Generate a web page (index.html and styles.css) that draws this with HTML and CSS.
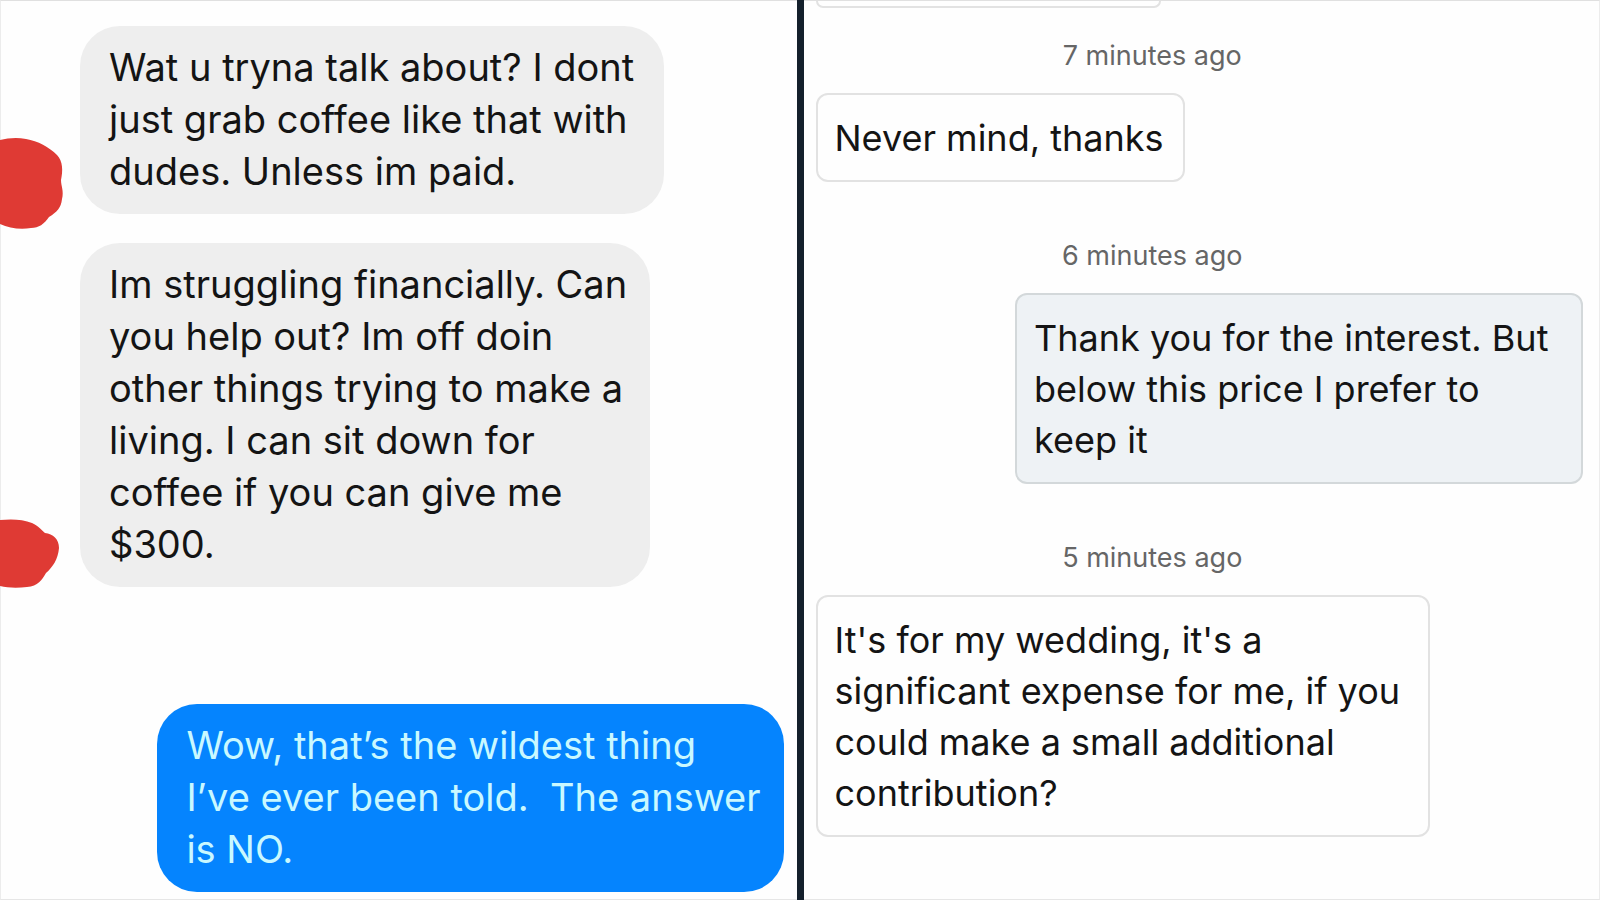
FILE: index.html
```html
<!DOCTYPE html>
<html lang="en">
<head>
<meta charset="utf-8">
<title>Conversations</title>
<link rel="stylesheet" href="styles.css">
</head>
<body>
<main class="split">
  <section class="panel chat" aria-label="Coffee conversation">
    <div class="row">
      <svg class="scribble scribble-round" viewBox="0 0 64 94" aria-hidden="true"><path d="M0 3C8 1 17 0 26 2C38 4 49 10 57 18C63 24 63 34 61 43C61 49 64 54 62 62C61 71 57 75 49 80C44 87 39 91 31 91C20 93 9 91 0 87Z"/></svg>
      <p class="bubble bubble-first">Wat u tryna talk about? I dont just grab coffee like that with dudes. Unless im paid.</p>
    </div>
    <div class="row">
      <svg class="scribble scribble-flat" viewBox="0 0 64 70" aria-hidden="true"><path d="M0 1C10 0 23 0 32 4C39 7 41 11 45 14C53 15 59 20 59 29C58 40 53 48 46 54C42 61 38 67 27 68C18 69 8 69 0 67Z"/></svg>
      <p class="bubble bubble-second">Im struggling financially. Can you help out? Im off doin<br>other things trying to make a living. I can sit down for<br>coffee if you can give me $300.</p>
    </div>
    <div class="row row-sent">
      <p class="bubble bubble-sent">Wow, that’s the wildest thing I’ve ever been told.&nbsp; The answer is NO.</p>
    </div>
  </section>
  <section class="panel market" aria-label="Price conversation">
    <div class="card card-cut"></div>
    <time class="stamp stamp-first">7 minutes ago</time>
    <p class="card">Never mind, thanks</p>
    <time class="stamp">6 minutes ago</time>
    <p class="card card-sent">Thank you for the interest. But below this price I prefer to keep it</p>
    <time class="stamp">5 minutes ago</time>
    <p class="card card-long">It's for my wedding, it's a significant expense for me, if you could make a small additional contribution?</p>
  </section>
</main>
</body>
</html>
```
FILE: styles.css
```css
* {
  box-sizing: border-box;
}

body {
  margin: 0;
  background: #fefefe;
  color: #141414;
  font-family: Inter, "Liberation Sans", sans-serif;
}

p {
  margin: 0;
}

.split {
  display: grid;
  grid-template-columns: 1fr 7px 1fr;
  min-height: 100vh;
  background: #14202c;
}

.panel {
  background: #fefefe;
  border-top: 1px solid #e0e0e0;
  border-bottom: 1px solid #e6e6e6;
}

.chat {
  grid-column: 1;
  display: flex;
  flex-direction: column;
  gap: 29px;
  padding: 25px 13px 6px 79px;
  border-left: 1px solid #ececec;
}

.row {
  position: relative;
  display: flex;
}

.row-sent {
  justify-content: flex-end;
  margin-top: 88px;
}

.bubble {
  padding: 15px 16px 17px 29px;
  border-radius: 40px;
  background: #eeeeee;
  font-size: 38px;
  line-height: 52px;
}

.bubble-first {
  width: 83%;
}

.bubble-second {
  width: 81%;
}

.bubble-sent {
  width: 89%;
  background: #0584fe;
  color: #c9f8ff;
}

.scribble {
  position: absolute;
  left: -80px;
  width: 64px;
  fill: #df3a34;
}

.scribble-round {
  bottom: -17px;
  height: 94px;
}

.scribble-flat {
  bottom: -2px;
  height: 70px;
}

.market {
  grid-column: 3;
  display: flex;
  flex-direction: column;
  align-items: flex-start;
  padding: 0 16px 24px 12px;
  border-right: 1px solid #ececec;
}

.card {
  padding: 18px 20px 16px 17px;
  border: 2px solid #e2e2e2;
  border-radius: 12px;
  font-size: 36px;
  line-height: 51px;
}

.card-cut {
  width: 45%;
  height: 7px;
  padding: 0;
  border-top: 0;
  border-radius: 0 0 12px 12px;
}

.card-sent {
  align-self: flex-end;
  width: 74%;
  border-color: #d3d8da;
  background: #eef2f5;
}

.card-long {
  width: 80%;
}

.stamp {
  align-self: center;
  margin: 57px 94px 20px 0;
  color: #666666;
  font-size: 27px;
  line-height: 34px;
}

.stamp-first {
  margin-top: 31px;
}
```
